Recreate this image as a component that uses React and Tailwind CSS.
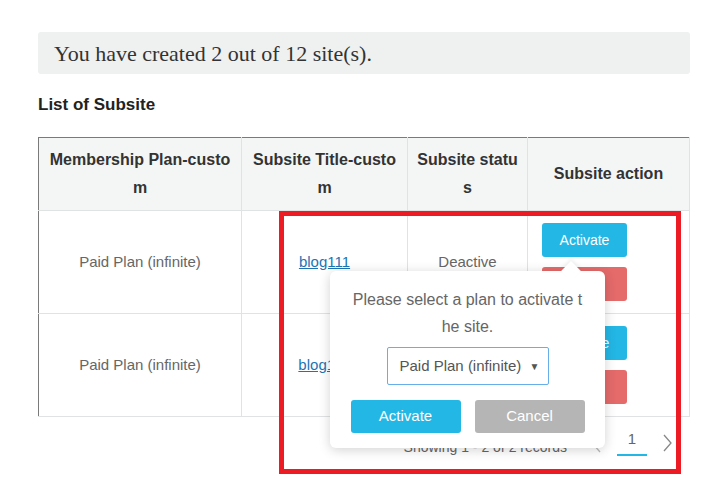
const rows = [
  { plan: 'Paid Plan (infinite)', title: 'blog111', status: 'Deactive' },
  { plan: 'Paid Plan (infinite)', title: 'blog112', status: 'Deactive' },
];

const App = () => {
  return (
    <div className="relative w-[727px] h-[500px] bg-white overflow-hidden font-['Liberation_Sans',Arial,sans-serif]">
      <div className="ml-[38px] w-[652px] pt-[32px]">
        {/* Alert */}
        <div className="h-[42px] bg-[#eff0f0] rounded-[3px] px-4 flex items-center">
          <span className="font-['Liberation_Serif',serif] text-[22px] text-[#333]">
            You have created 2 out of 12 site(s).
          </span>
        </div>

        <h3 className="mt-[21px] text-[17px] leading-[20px] font-bold text-[#222]">List of Subsite</h3>

        {/* Table */}
        <table className="mt-[22px] w-[651px] table-fixed border-collapse border-t border-l border-t-[#7a7a7a] border-l-[#7a7a7a]">
          <colgroup>
            <col className="w-[203px]" />
            <col className="w-[166px]" />
            <col className="w-[120px]" />
            <col className="w-[162px]" />
          </colgroup>
          <thead>
            <tr className="h-[73px] bg-[#f4f6f6]">
              <th className="border border-[#dfe3e4] border-t-[#7a7a7a] border-l-[#7a7a7a] px-2 text-[16px] leading-[28px] font-bold text-[#333] break-all">Membership Plan-custom</th>
              <th className="border border-[#dfe3e4] border-t-[#7a7a7a] px-2 text-[16px] leading-[28px] font-bold text-[#333] break-all">Subsite Title-custom</th>
              <th className="border border-[#dfe3e4] border-t-[#7a7a7a] px-2 text-[16px] leading-[28px] font-bold text-[#333] break-all">Subsite status</th>
              <th className="border border-[#dfe3e4] border-t-[#7a7a7a] px-2 text-[16px] leading-[28px] font-bold text-[#333] break-all">Subsite action</th>
            </tr>
          </thead>
          <tbody>
            {rows.map((row, i) => (
              <tr key={i} className="h-[103px]">
                <td className="border border-[#dfe3e4] border-l-[#7a7a7a] text-center text-[15px] text-[#666]">{row.plan}</td>
                <td className="border border-[#dfe3e4] text-center text-[15px]">
                  <a className="text-[#1b75b3] underline">{row.title}</a>
                </td>
                <td className="border border-[#dfe3e4] text-center text-[15px] text-[#666]">{row.status}</td>
                <td className="border border-[#dfe3e4] pl-[14px]">
                  <div className="flex flex-col gap-[10px]">
                    <button className="w-[85px] h-[34px] rounded-[3px] bg-[#23b7e5] text-white text-[14px]">Activate</button>
                    <button className="w-[85px] h-[34px] rounded-[3px] bg-[#e56a6a] text-white text-[14px]">Delete</button>
                  </div>
                </td>
              </tr>
            ))}
          </tbody>
        </table>

        {/* Pagination */}
        <div className="h-[50px] flex items-start justify-end pr-[18px]">
          <span className="mt-[22px] text-[14px] leading-[16px] text-[#666] mr-[25px]">Showing 1 - 2 of 2 records</span>
          <svg width="9" height="18" viewBox="0 0 9 18" className="mt-[18px] mr-[16px]">
            <polyline points="8,1 1,9 8,17" fill="none" stroke="#bbb" strokeWidth="1.3" />
          </svg>
          <div className="mt-[8px] w-[30px] h-[31px] flex items-center justify-center border-b-2 border-[#23b7e5] text-[15px] text-[#666]">1</div>
          <svg width="9" height="18" viewBox="0 0 9 18" className="mt-[17px] ml-[16px]">
            <polyline points="1,1 8,9 1,17" fill="none" stroke="#888" strokeWidth="1.3" />
          </svg>
        </div>
      </div>

      {/* Popover */}
      <div className="absolute left-[330px] top-[271px] w-[275px] h-[177px] bg-white rounded-[6px] shadow-[0_2px_12px_rgba(0,0,0,0.18)]">
        <div className="absolute left-[234px] -top-[7px] w-[14px] h-[14px] bg-white rotate-45 shadow-[-2px_-2px_4px_rgba(0,0,0,0.06)]" />
        <div className="relative px-[22px] pt-[15px] text-center text-[16px] leading-[27px] text-[#666] break-all">
          Please select a plan to activate the site.
        </div>
        <div className="relative mt-[7px] mx-auto w-[162px] h-[38px] border border-[#66afe9] rounded-[2px] flex items-center pl-[12px] pr-[8px]">
          <span className="flex-1 text-[15px] text-[#555]">Paid Plan (infinite)</span>
          <span className="text-[10px] text-[#555]">▼</span>
        </div>
        <div className="relative mt-[15px] flex justify-center gap-[14px]">
          <button className="w-[110px] h-[33px] rounded-[3px] bg-[#23b7e5] text-white text-[15px]">Activate</button>
          <button className="w-[110px] h-[33px] rounded-[3px] bg-[#b5b5b5] text-white text-[15px]">Cancel</button>
        </div>
      </div>

      {/* Annotation frame */}
      <div className="absolute left-[279px] top-[211px] w-[402px] h-[263px] border-[5px] border-[#ed1c24] pointer-events-none" />
    </div>
  );
};

export default App;
